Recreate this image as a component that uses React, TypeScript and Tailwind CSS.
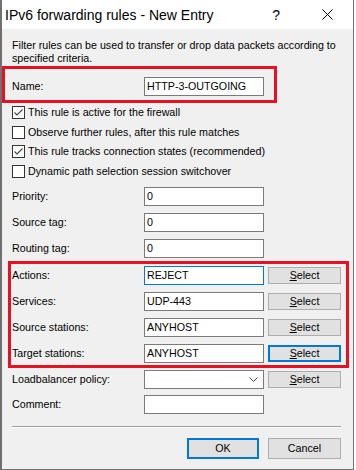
import clsx from "clsx";

function Field({ value, focused }: { value?: string; focused?: boolean }) {
	return (
		<div
			className={clsx(
				"w-[120px] h-[19px] shrink-0 bg-white border flex items-center pl-[2px] leading-none",
				focused ? "border-[#0078d7]" : "border-[#7a7a7a]",
			)}
		>
			{value}
		</div>
	);
}

function SelectButton({ focused }: { focused?: boolean }) {
	return (
		<div
			className={clsx(
				"ml-[4px] w-[73px] h-[17px] shrink-0 bg-[#e1e1e1] flex items-center justify-center leading-none",
				focused ? "border-2 border-[#0078d7]" : "border border-[#adadad]",
			)}
		>
			<span>
				<span className="underline underline-offset-1">S</span>elect
			</span>
		</div>
	);
}

function Checkbox({ checked, label }: { checked?: boolean; label: string }) {
	return (
		<div className="h-[19.5px] flex items-center pl-[10px]">
			<div className="w-[13px] h-[13px] shrink-0 bg-white border border-[#333333] flex items-center justify-center">
				{checked && (
					<svg width="11" height="11" viewBox="0 0 11 11">
						<polyline
							points="1.5,5.5 4,8 9.5,2.5"
							fill="none"
							stroke="#444444"
							strokeWidth="1.1"
						/>
					</svg>
				)}
			</div>
			<span className="ml-[3px] leading-none">{label}</span>
		</div>
	);
}

function Row({ label, value }: { label: string; value: string }) {
	return (
		<div className="h-[26px] flex items-center pl-[10px]">
			<span className="w-[132px] shrink-0 leading-none">{label}</span>
			<Field value={value} />
		</div>
	);
}

function SelectRow({
	label,
	value,
	focusedField,
	focusedButton,
}: {
	label: string;
	value: string;
	focusedField?: boolean;
	focusedButton?: boolean;
}) {
	return (
		<div className="h-[26px] shrink-0 flex items-center pl-[1px]">
			<span className="w-[132px] shrink-0 leading-none">{label}</span>
			<Field value={value} focused={focusedField} />
			<SelectButton focused={focusedButton} />
		</div>
	);
}

export default function App() {
	return (
		<div className="w-[356px] h-[470px] bg-white font-['Liberation_Sans',Arial,sans-serif] text-black">
			<div className="w-[354px] h-[470px] flex flex-col border-l-2 border-r border-b border-[#707070]">
				<div className="h-[29px] shrink-0 bg-white flex items-center pl-[3px] text-[14px]">
					<span className="leading-none">IPv6 forwarding rules - New Entry</span>
					<span className="ml-auto leading-none">?</span>
					<svg className="ml-[42px] mr-[20px]" width="11" height="11" viewBox="0 0 11 11">
						<path d="M0.5 0.5 L10.5 10.5 M10.5 0.5 L0.5 10.5" stroke="#000" strokeWidth="1" />
					</svg>
				</div>

				<div className="flex-1 bg-[#f0f0f0] flex flex-col text-[10.7px]">
					<p className="mt-[10px] pl-[10px] leading-[13px]">
						Filter rules can be used to transfer or drop data packets according to
						<br />
						specified criteria.
					</p>

					<div className="mt-[1px] w-[275px] h-[37px] shrink-0 border-[3px] border-[#e81123] pt-[8px] pl-[7px]">
						<div className="h-[19px] flex items-center">
							<span className="w-[132px] shrink-0 leading-none">Name:</span>
							<Field value="HTTP-3-OUTGOING" />
						</div>
					</div>

					<Checkbox checked label="This rule is active for the firewall" />
					<Checkbox label="Observe further rules, after this rule matches" />
					<Checkbox checked label="This rule tracks connection states (recommended)" />
					<Checkbox label="Dynamic path selection session switchover" />

					<div className="mt-[2px]">
						<Row label="Priority:" value="0" />
						<Row label="Source tag:" value="0" />
						<Row label="Routing tag:" value="0" />
					</div>

					<div className="ml-[6px] w-[341px] h-[107px] shrink-0 border-[3px] border-[#e81123] flex flex-col justify-center">
						<SelectRow label="Actions:" value="REJECT" focusedField />
						<SelectRow label="Services:" value="UDP-443" />
						<SelectRow label="Source stations:" value="ANYHOST" />
						<SelectRow label="Target stations:" value="ANYHOST" focusedButton />
					</div>

					<div className="h-[23px] flex items-center pl-[10px]">
						<span className="w-[132px] shrink-0 leading-none">Loadbalancer policy:</span>
						<div className="w-[120px] h-[19px] shrink-0 bg-white border border-[#7a7a7a] flex items-center justify-end pr-[5px]">
							<svg width="9" height="5" viewBox="0 0 9 5">
								<polyline points="0.5,0.5 4.5,4.5 8.5,0.5" fill="none" stroke="#444" strokeWidth="1" />
							</svg>
						</div>
						<SelectButton />
					</div>
					<Row label="Comment:" value="" />

					<div className="mt-[9px] ml-[10px] w-[329px] border-t border-[#a0a0a0] border-b border-b-white" />

					<div className="mt-[10px] flex pl-[185px]">
						<div className="w-[72px] h-[21px] bg-[#e1e1e1] border-2 border-[#0078d7] flex items-center justify-center leading-none">
							OK
						</div>
						<div className="ml-[9px] w-[73px] h-[21px] bg-[#e1e1e1] border border-[#adadad] flex items-center justify-center leading-none">
							Cancel
						</div>
					</div>
				</div>
			</div>
		</div>
	);
}
